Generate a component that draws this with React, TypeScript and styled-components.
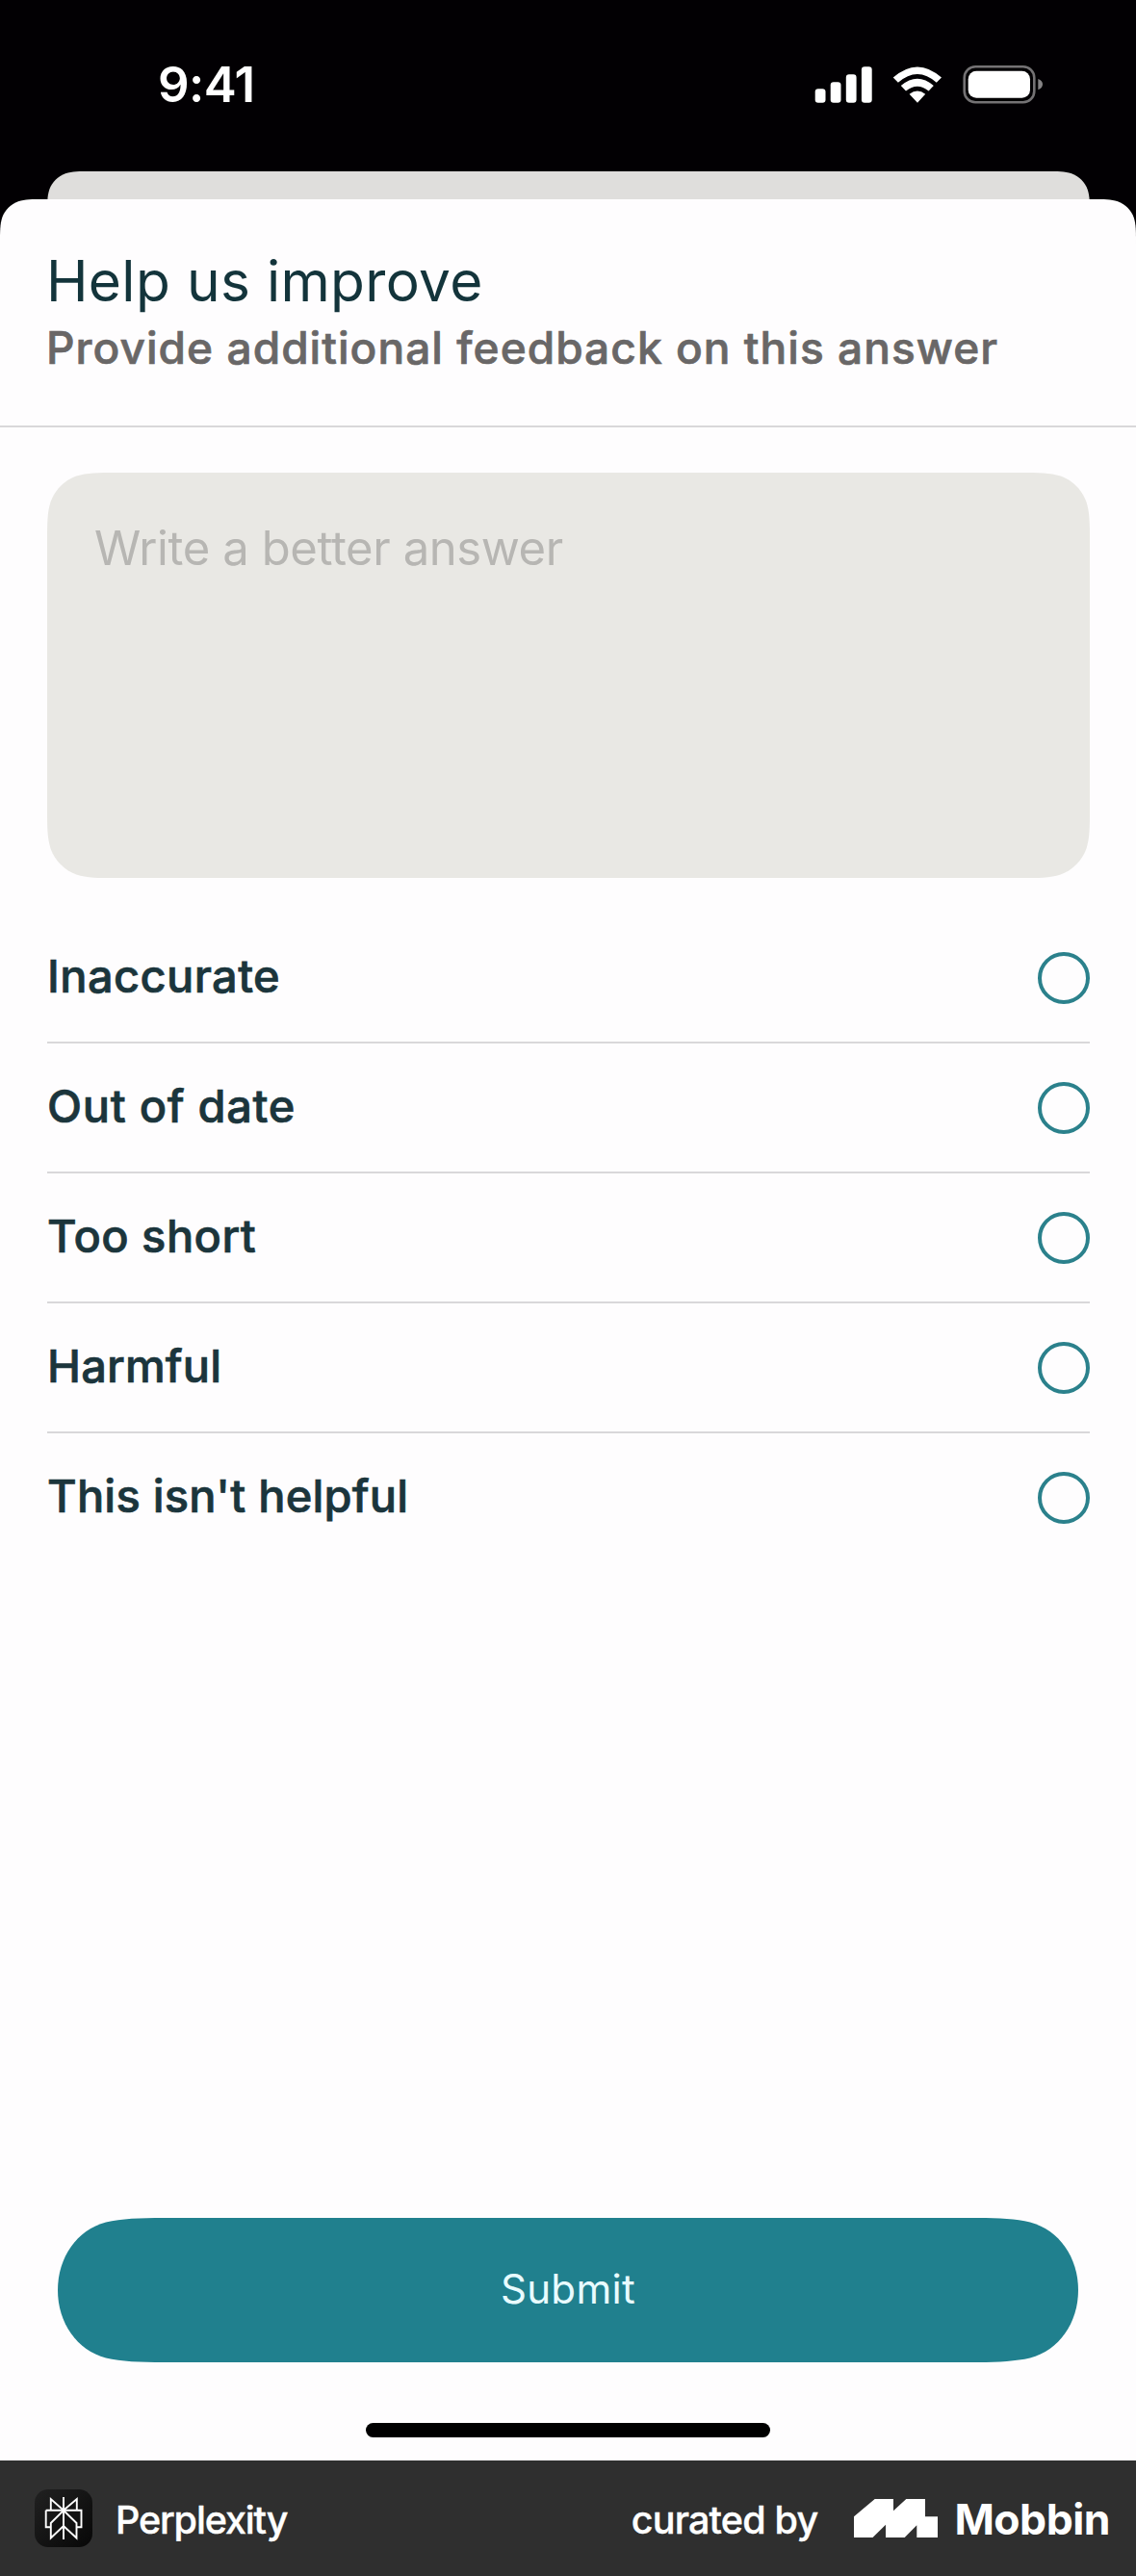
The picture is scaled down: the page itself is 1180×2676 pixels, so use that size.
import React from "react";
import styled, { createGlobalStyle } from "styled-components";

/* Continuous ("squircle") corner contour, the iOS shape for sheets and fields. */
const K = [1.528665, 1.088493, 0.868407, 0.631494, 0.372824, 0.16906, 0.074911];

const smoothRect = (w: number, h: number, r: number, bottom = true): string => {
  const [a, b, c, d, e, f, g] = K.map((k) => +(k * r).toFixed(3));
  const top =
    `M${a},0 H${w - a} C${w - b},0 ${w - c},0 ${w - d},${g} ` +
    `C${w - e},${f} ${w - f},${e} ${w - g},${d} C${w},${c} ${w},${b} ${w},${a} `;
  const base = bottom
    ? `V${h - a} C${w},${h - b} ${w},${h - c} ${w - g},${h - d} ` +
      `C${w - f},${h - e} ${w - e},${h - f} ${w - d},${h - g} C${w - c},${h} ${w - b},${h} ${w - a},${h} ` +
      `H${a} C${b},${h} ${c},${h} ${d},${h - g} C${e},${h - f} ${f},${h - e} ${g},${h - d} C0,${h - c} 0,${h - b} 0,${h - a} `
    : `V${h} H0 `;
  return `${top}${base}V${a} C0,${b} 0,${c} ${g},${d} C${f},${e} ${e},${f} ${d},${g} C${c},0 ${b},0 ${a},0 Z`;
};

const capsule =
  "M0,75 C0,41 20,12.5 50,4.5 C66,0.8 85,0 110,0 H950 C975,0 994,0.8 1010,4.5 C1040,12.5 1060,41 1060,75 " +
  "C1060,109 1040,137.5 1010,145.5 C994,149.2 975,150 950,150 H110 C85,150 66,149.2 50,145.5 C20,137.5 0,109 0,75 Z";

const GlobalStyle = createGlobalStyle`
  * { box-sizing: border-box; }
  body { margin: 0; background: #020003; }
`;

const Screen = styled.div`
  width: 1180px;
  height: 2676px;
  display: flex;
  flex-direction: column;
  background: #020003;
  font-family: Inter, "Liberation Sans", sans-serif;
  overflow: hidden;
`;

const StatusBar = styled.header`
  height: 178px;
  flex: none;
  display: flex;
  justify-content: space-between;
  align-items: flex-start;
  padding: 63px 97px 0 164px;
`;

const Clock = styled.span`
  font-size: 51px;
  line-height: 50px;
  font-weight: 600;
  letter-spacing: -0.6px;
  color: #fff;
`;

const StatusIcons = styled.svg`
  width: 237px;
  height: 40px;
  margin-top: 5px;
`;

const BackCard = styled.div`
  height: 29px;
  flex: none;
  margin: 0 48px 0 49px;
  background: #dfdedc;
  clip-path: path("${smoothRect(1083, 80, 30, false)}");
`;

const Sheet = styled.main`
  height: 2349px;
  flex: none;
  display: flex;
  flex-direction: column;
  background: #fefdfe;
  clip-path: path("${smoothRect(1180, 2349, 30, false)}");
`;

const SheetHeader = styled.div`
  height: 237px;
  padding: 49px 48px 0;
  border-bottom: 2px solid #d9d8da;
`;

const Title = styled.h1`
  margin: 0;
  font-size: 58.6px;
  line-height: 72px;
  font-weight: 400;
  letter-spacing: 0.33px;
  color: #13343b;
  white-space: nowrap;
`;

const Subtitle = styled.p`
  margin: 0;
  font-size: 46px;
  line-height: 67px;
  font-weight: 500;
  letter-spacing: 1.05px;
  color: #696767;
  -webkit-text-stroke: 0.7px #696767;
  white-space: nowrap;
`;

const AnswerField = styled.div`
  width: 1083px;
  height: 421px;
  margin: 47px 0 0 49px;
  padding: 48px 49px;
  background: #e9e8e4;
  clip-path: path("${smoothRect(1083, 421, 48)}");
`;

const Placeholder = styled.span`
  display: block;
  font-size: 49px;
  line-height: 62px;
  letter-spacing: -0.4px;
  color: #b7b6b3;
  white-space: nowrap;
`;

const Options = styled.ul`
  list-style: none;
  margin: 37px 48px 0 49px;
  padding: 0;
`;

const Option = styled.li`
  height: 135px;
  display: flex;
  align-items: center;
  justify-content: space-between;
  border-bottom: 2px solid #d9d8da;
  &:last-child {
    border-bottom-color: transparent;
  }
`;

const OptionLabel = styled.span<{ $tracking: number }>`
  font-size: 47px;
  line-height: 60px;
  font-weight: 500;
  letter-spacing: ${(p) => p.$tracking}px;
  color: #1b353c;
  -webkit-text-stroke: 0.7px #1b353c;
  white-space: nowrap;
  padding-bottom: 4px;
`;

const Radio = styled.span`
  width: 54px;
  height: 54px;
  border: 4.5px solid #2b818c;
  border-radius: 50%;
`;

const SheetFooter = styled.div`
  margin-top: auto;
  display: flex;
  flex-direction: column;
  align-items: center;
  padding-bottom: 24px;
`;

const SubmitButton = styled.button`
  width: 1060px;
  height: 150px;
  border: 0;
  padding: 0 0 3px;
  background: #20808e;
  clip-path: path("${capsule}");
  color: #e8fbff;
  font: 400 42px/56px Inter, sans-serif;
  letter-spacing: 0.3px;
`;

const HomeIndicator = styled.div`
  width: 420px;
  height: 15px;
  margin-top: 63px;
  border-radius: 8px;
  background: #000;
`;

const CreditBar = styled.footer`
  height: 120px;
  flex: none;
  display: flex;
  align-items: center;
  padding: 0 27px 0 36px;
  background: #2f2f2f;
  color: #fff;
`;

const AppIcon = styled.span`
  width: 60px;
  height: 60px;
  flex: none;
  border-radius: 14px;
  background: linear-gradient(135deg, #212121, #070707);
`;

const CreditText = styled.span<{ $spacing: number }>`
  font-size: 39.5px;
  line-height: 60px;
  font-weight: 500;
  letter-spacing: ${(p) => p.$spacing}px;
  -webkit-text-stroke: 0.4px #fff;
  white-space: nowrap;
  padding-top: 3px;
`;

const AppName = styled(CreditText)`
  margin-left: 24px;
  margin-right: auto;
`;

const MobbinMark = styled.svg`
  width: 87px;
  height: 40px;
  margin: 0 17px 0 38px;
`;

const MobbinName = styled.span`
  font-size: 44.5px;
  line-height: 60px;
  font-weight: 700;
  letter-spacing: -0.5px;
  padding-top: 1px;
`;

const options = [
  { label: "Inaccurate", tracking: 0.4 },
  { label: "Out of date", tracking: 0.7 },
  { label: "Too short", tracking: 0.45 },
  { label: "Harmful", tracking: 0.15 },
  { label: "This isn't helpful", tracking: 0.2 },
];

export default function App() {
  return (
    <>
      <GlobalStyle />
      <Screen>
        <StatusBar>
          <Clock>9:41</Clock>
          <StatusIcons viewBox="846 68 237 40" fill="#fff">
            <rect x="846.7" y="92.3" width="10.8" height="14.5" rx="3.2" />
            <rect x="862.7" y="85.3" width="10.8" height="21.5" rx="3.2" />
            <rect x="878.8" y="77.3" width="10.8" height="29.5" rx="3.2" />
            <rect x="894.9" y="69.3" width="10.8" height="37.5" rx="3.2" />
            <path d="M927.7 80.6 Q953 58.2 978 80.6 L972.8 85.8 Q953 68.2 932.9 85.8 Z" />
            <path d="M935.8 89 Q953 74.4 969.8 89 L964.6 94.6 Q953 84.8 941 94.6 Z" />
            <path d="M944.6 97.8 Q953 91.4 961.2 97.8 L953 106.8 Z" />
            <rect x="1001.7" y="69.3" width="72.6" height="37" rx="11.5" fill="none" stroke="#747274" strokeWidth="2.6" />
            <rect x="1005.7" y="73.8" width="64.3" height="28" rx="8.5" />
            <path d="M1078.3 82 Q1083 83.6 1083 87.6 Q1083 91.6 1078.3 93.3 Z" fill="#858385" />
          </StatusIcons>
        </StatusBar>
        <BackCard />
        <Sheet>
          <SheetHeader>
            <Title>Help us improve</Title>
            <Subtitle>Provide additional feedback on this answer</Subtitle>
          </SheetHeader>
          <AnswerField>
            <Placeholder>Write a better answer</Placeholder>
          </AnswerField>
          <Options>
            {options.map(({ label, tracking }) => (
              <Option key={label}>
                <OptionLabel $tracking={tracking}>{label}</OptionLabel>
                <Radio />
              </Option>
            ))}
          </Options>
          <SheetFooter>
            <SubmitButton>Submit</SubmitButton>
            <HomeIndicator />
          </SheetFooter>
        </Sheet>
        <CreditBar>
          <AppIcon>
            <svg width="60" height="60" viewBox="0 0 60 60" fill="none" stroke="#fff" strokeWidth="1.9">
              <path d="M30 8V52M11.7 21.8H48.5V39.3H43.5M16.7 39.3H11.7V21.8" />
              <path d="M16.8 21.8V10L30 21.8L43.8 10V21.8" />
              <path d="M30 21.8L16.8 35V50.5L30 38L43.5 50.5V35Z" />
            </svg>
          </AppIcon>
          <AppName $spacing={-1.15}>Perplexity</AppName>
          <CreditText $spacing={-0.8}>curated by</CreditText>
          <MobbinMark viewBox="0 0 87 40" fill="#fff">
            <path d="M0 18.3L21.7 0H41V12.3L54.3 0H74V18.2H87V40H65.3V27.3L52.7 40H33V26.7L19.5 40H0Z" />
          </MobbinMark>
          <MobbinName>Mobbin</MobbinName>
        </CreditBar>
      </Screen>
    </>
  );
}
